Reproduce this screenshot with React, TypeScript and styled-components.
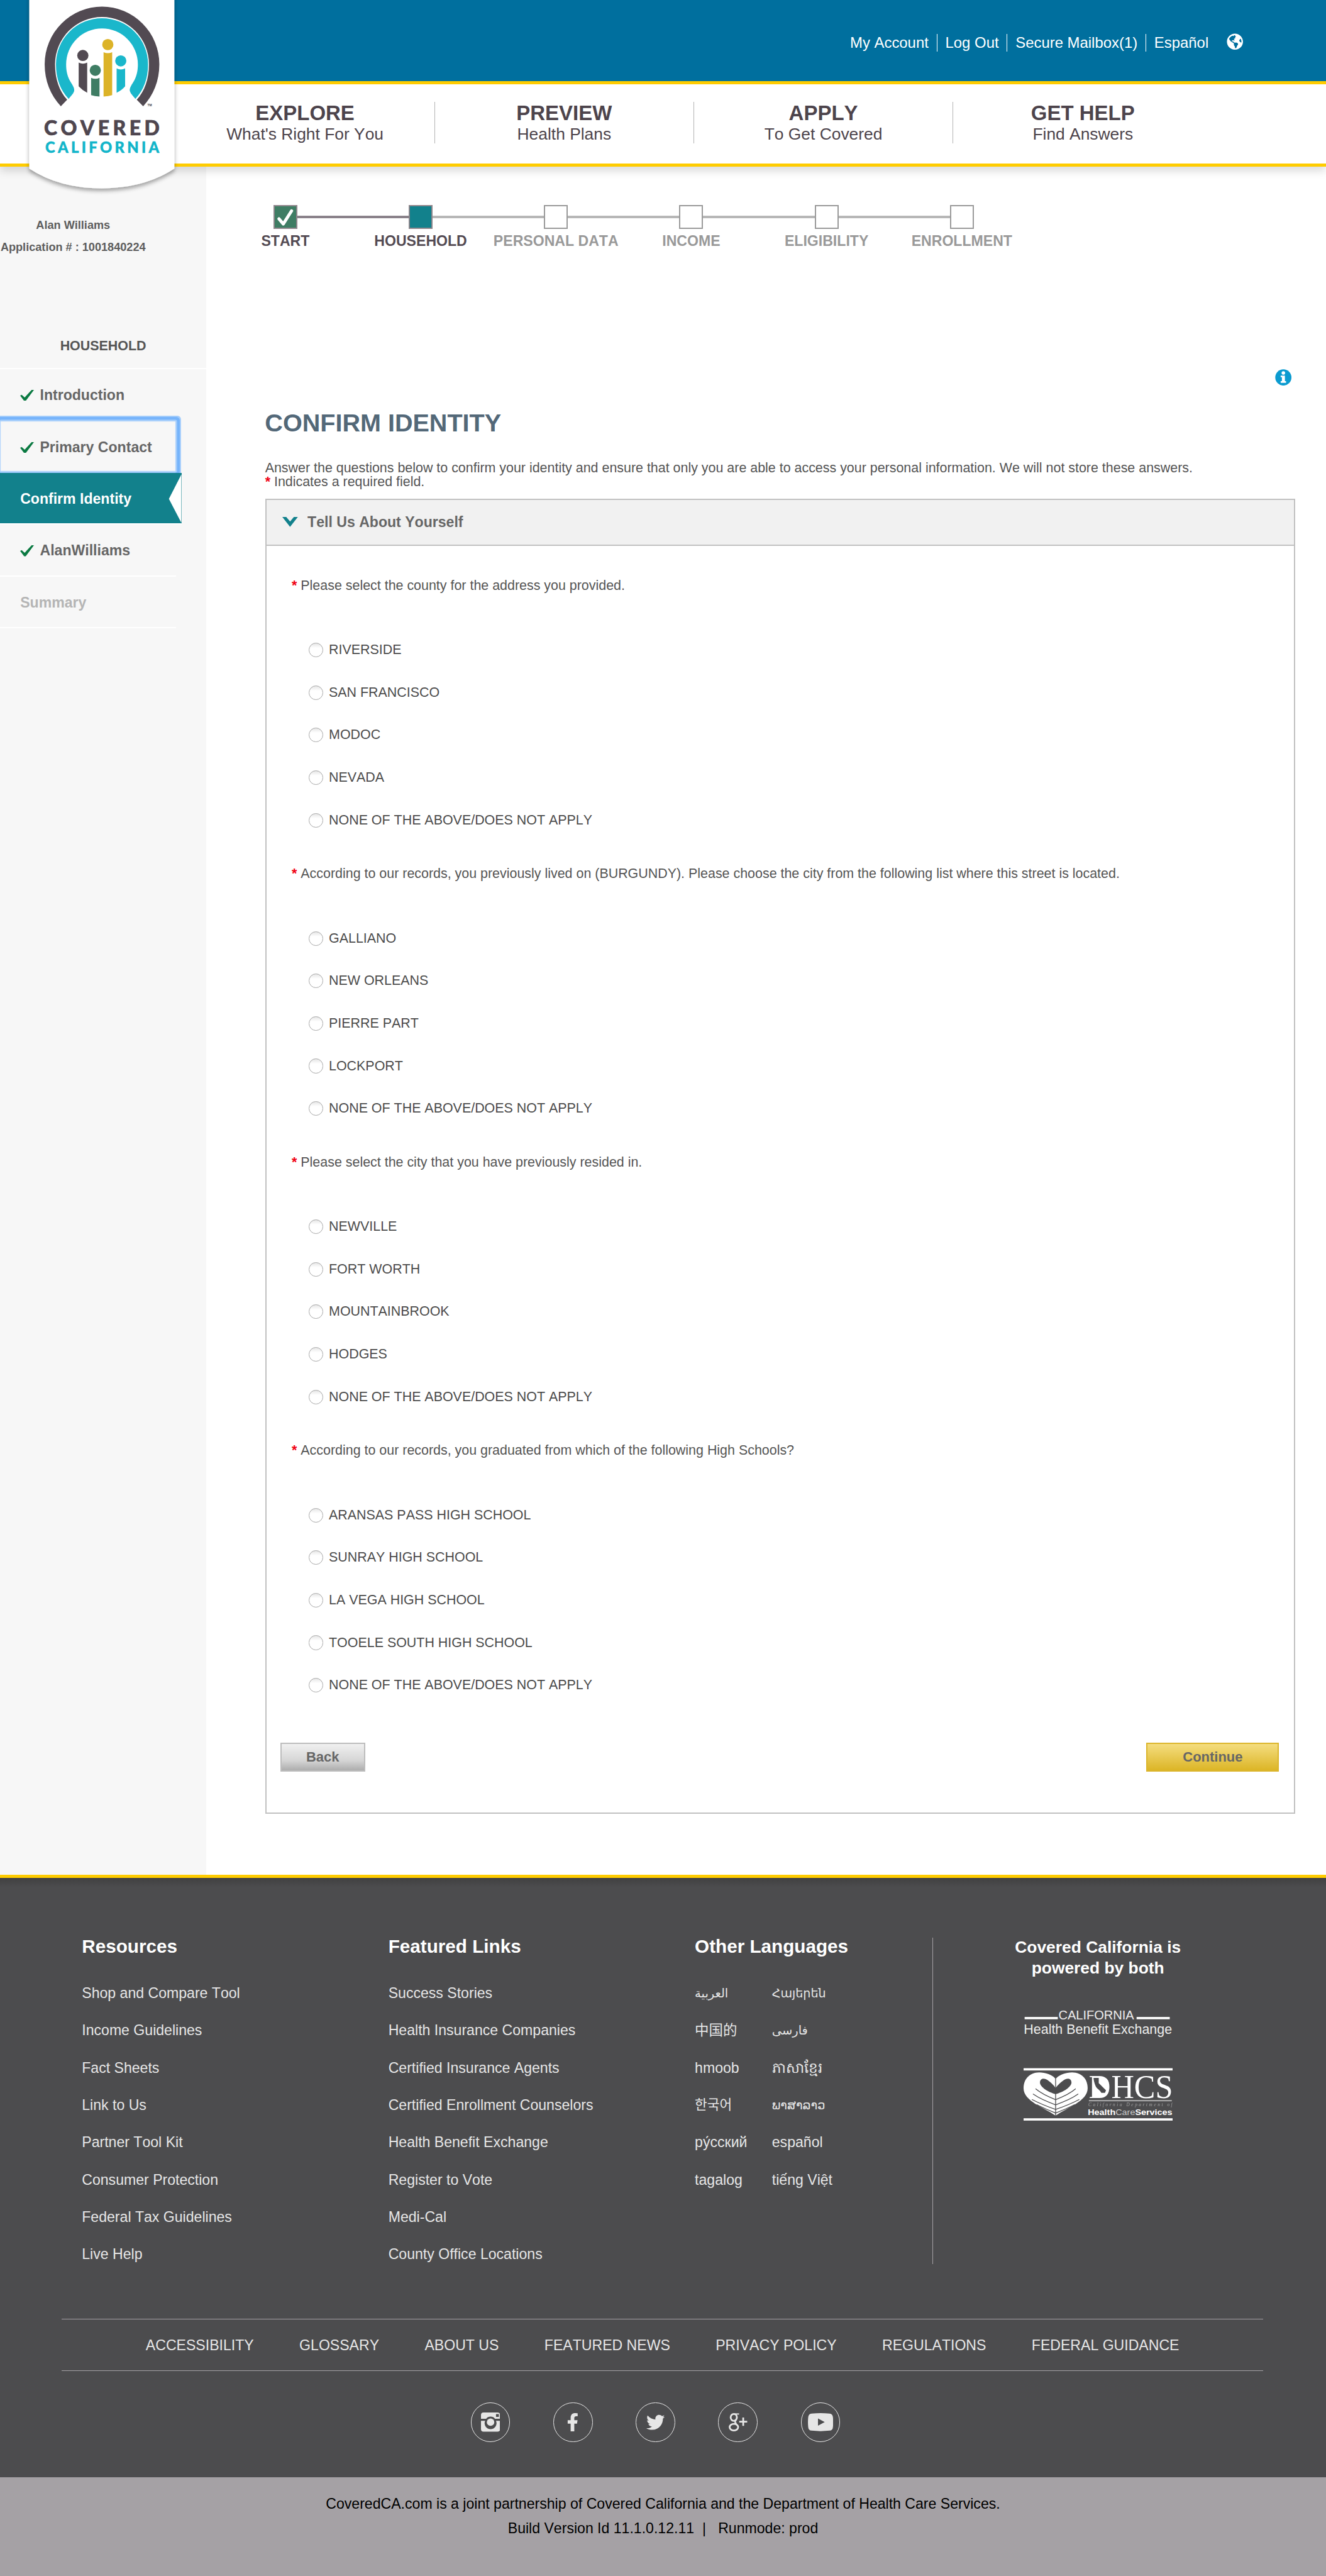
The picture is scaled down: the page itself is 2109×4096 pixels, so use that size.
import React from "react";
import styled, { createGlobalStyle, css } from "styled-components";
import { FaFacebookF, FaTwitter, FaGlobeAmericas } from "react-icons/fa";

const GlobalStyle = createGlobalStyle`
  html, body { margin: 0; padding: 0; background: #fff; }
  *, *::before, *::after { box-sizing: border-box; }
`;

const sans = `"Liberation Sans", Arial, "DejaVu Sans", "Noto Sans", "Noto Sans CJK SC", "Noto Sans CJK KR", sans-serif`;
const hairline = "1px";
const frameline = "1.22px";

const Page = styled.div`
  zoom: 1.64895;
  width: 1279px;
  height: 2484px;
  overflow: hidden;
  background: #fff;
  font-family: ${sans};
  font-kerning: none;
  color: #555;
`;

/* ---------- header ---------- */
const Header = styled.header`
  position: relative;
  z-index: 2;
  height: 161px;
  box-shadow: 0 4px 8px rgba(0, 0, 0, 0.14);
`;
const TopBar = styled.div`
  height: 81px;
  background: #006f9e;
  border-bottom: 3.1px solid #ffcc00;
  display: flex;
  align-items: flex-start;
  justify-content: flex-end;
  padding: 33px 79.8px 0 0;
`;
const TopLink = styled.a<{ $last?: boolean }>`
  font-size: 14.5px;
  line-height: 17px;
  padding: 0 7.8px;
  color: #fff;
  white-space: nowrap;
  border-right: ${(p) => (p.$last ? "0" : hairline + " solid #fff")};
`;
const Globe = styled.span`
  display: flex;
  margin: -1px 0 0 9.7px;
  color: #fff;
  font-size: 16px;
`;
const MainNav = styled.nav`
  height: 80px;
  background: #fff;
  border-bottom: 3.1px solid #ffcc00;
  display: flex;
  padding: 17px 0 0 169.5px;
`;
const NavItem = styled.a`
  width: 250px;
  height: 40px;
  text-align: center;
  color: #4d444c;
  border-right: ${hairline} solid #b3b3b3;
  &:last-child { border-right: 0; }
`;
const NavTitle = styled.div`
  font-size: 20px;
  font-weight: bold;
  line-height: 22px;
`;
const NavSub = styled.div`
  padding-top: 0.5px;
  font-size: 16px;
  line-height: 18px;
`;
const LogoSlot = styled.div`
  position: absolute;
  left: 18px;
  top: 0;
  width: 160px;
  height: 200px;
`;

const Logo = () => (
  <svg width="160" height="200" viewBox="18 0 160 200">
    <defs>
      <filter id="tag-shadow" x="-20%" y="-10%" width="140%" height="125%">
        <feDropShadow dx="0" dy="2.5" stdDeviation="2" floodOpacity="0.35" />
      </filter>
    </defs>
    <path d="M28-10H168V162.5Q139 181.6 98 181.6T28 162.5Z" fill="#fff" filter="url(#tag-shadow)" />
    <path
      fill="#524a52"
      d="M58.5 102.5C48.5 91.5 42.9 78 42.9 62A55.3 55.6 0 0 1 153.5 62C153.5 78 147.9 91.5 137.9 102.5L131.7 96.2C139.4 88 143.5 76 143.5 62A45.3 45.6 0 0 0 52.9 62C52.9 76 57 88 64.6 96.2Z"
    />
    <path
      fill="#1ab7cb"
      d="M66 95.3C58 86.8 53.8 76 53.8 62A44.4 44.4 0 0 1 142.6 62C142.6 76 138.4 86.8 130.4 95.3C128.5 93 126 90.5 125.2 88.2C124 85 127.5 81 129.6 77C131.8 72.5 132.8 68 132.8 62A34.6 34.6 0 0 0 63.6 62C63.6 68 64.6 72.5 66.8 77C68.9 81 72.4 85 71.2 88.2C70.4 90.5 67.9 93 66 95.3Z"
    />
    <g fill="#524a52">
      <circle cx="79.7" cy="53.5" r="5.4" />
      <path d="M75.7 60.3Q79.8 62.4 83.9 60.3V89.4Q79 87 75.7 83.3Z" />
    </g>
    <g fill="#3f7d64">
      <circle cx="91.7" cy="67.8" r="5.4" />
      <path d="M87.7 75Q91.8 77 95.8 75V93.1Q91 92.8 87.7 91.7Z" />
    </g>
    <g fill="#dcb328">
      <circle cx="103.8" cy="43" r="5.4" />
      <path d="M99.7 50.3Q103.8 52.3 108 50.3V91.7Q104.5 92.8 99.7 93.1Z" />
    </g>
    <g fill="#1ab7cb">
      <circle cx="116.3" cy="58.7" r="5.4" />
      <path d="M112.3 66Q116.4 68 120.5 66V83.3Q117 87.4 112.3 89.4Z" />
    </g>
    <text x="142" y="102.3" fontSize="3" fontWeight="bold" fill="#524a52" fontFamily={sans}>TM</text>
    <text x="42.2" y="130.7" fontSize="19.4" fontWeight="900" fill="#4f464f" stroke="#4f464f" strokeWidth="0.4" fontFamily="Lato, sans-serif" textLength="111.5" lengthAdjust="spacing">COVERED</text>
    <text x="43.4" y="147.6" fontSize="14.4" fontWeight="900" fill="#12b5ca" stroke="#12b5ca" strokeWidth="0.3" fontFamily="Lato, sans-serif" textLength="110" lengthAdjust="spacing">CALIFORNIA</text>
  </svg>
);

/* ---------- sidebar ---------- */
const Body = styled.div`
  display: flex;
  height: 1647px;
`;
const Sidebar = styled.aside`
  width: 199px;
  flex: none;
  background: #f7f7f7;
  padding-top: 46px;
`;
const Applicant = styled.div`
  width: 141px;
  font-size: 11px;
  font-weight: bold;
  line-height: 21px;
  text-align: center;
  white-space: nowrap;
  color: #5d5d5d;
`;
const SideTitle = styled.div`
  margin-top: 74.7px;
  height: 32.3px;
  font-size: 13px;
  font-weight: bold;
  line-height: 20px;
  text-align: center;
  color: #555;
  border-bottom: ${frameline} solid #fff;
`;
const SideList = styled.ul`
  list-style: none;
  margin: 0;
  padding: 0;
  width: 170px;
`;
type RowKind = "done" | "focus" | "active" | "disabled";
const SideRow = styled.li<{ $kind: RowKind }>`
  position: relative;
  height: 50px;
  padding: 1.8px 0 0 19.5px;
  display: flex;
  align-items: center;
  font-size: 14px;
  font-weight: bold;
  color: ${(p) => (p.$kind === "active" ? "#fff" : p.$kind === "disabled" ? "#b5b5b5" : "#666")};
  border-bottom: ${frameline} solid #fff;
  ${(p) =>
    p.$kind === "focus" &&
    css`
      height: 49px;
      margin-bottom: 1px;
      border-bottom: 0;
      border-radius: 1px;
      box-shadow: inset 0 0 0 0.7px #b5d6fb, 0 0 0 1px #a4cdfb, 0 0 0 3.6px #76b4fb, 0 0 0 4.8px #a4cdfb;
    `}
  ${(p) =>
    p.$kind === "active" &&
    css`
      width: 175px;
      background: #12818c;
      background-clip: padding-box;
    `}
`;
const CheckSlot = styled.span`
  display: flex;
  width: 19px;
`;
const Notch = styled.svg`
  position: absolute;
  right: 0;
  top: 0;
`;
const Check = () => (
  <CheckSlot>
    <svg width="13.4" height="10.6" viewBox="0 0 52 50" preserveAspectRatio="none">
      <path d="M0 26L6 22L17 34L43 0H52L21 50H15Z" fill="#0b7a42" />
    </svg>
  </CheckSlot>
);
const sideRows: { label: string; kind: RowKind }[] = [
  { label: "Introduction", kind: "done" },
  { label: "Primary Contact", kind: "focus" },
  { label: "Confirm Identity", kind: "active" },
  { label: "AlanWilliams", kind: "done" },
  { label: "Summary", kind: "disabled" },
];

/* ---------- main ---------- */
const Main = styled.main`
  flex: 1;
  padding-top: 37px;
`;
const Steps = styled.div`
  display: flex;
  margin-left: 11px;
`;
const Step = styled.div`
  width: 130.5px;
`;
const StepTrack = styled.div`
  display: flex;
  align-items: center;
`;
const StepLine = styled.span<{ $tone: "none" | "dark" | "light" }>`
  flex: 1;
  height: 2.4px;
  margin-bottom: 1px;
  background: ${(p) => (p.$tone === "none" ? "transparent" : p.$tone === "dark" ? "#8a828a" : "#b7b7b7")};
`;
const StepBox = styled.span<{ $state: "done" | "current" | "todo" }>`
  width: 23px;
  height: 23px;
  border: ${frameline} solid ${(p) => (p.$state === "todo" ? "#9a9a9a" : "#8f868c")};
  background: ${(p) => (p.$state === "done" ? "#3f7d64" : p.$state === "current" ? "#12818c" : "#fff")};
  display: flex;
  align-items: center;
  justify-content: center;
`;
const StepLabel = styled.div<{ $on: boolean }>`
  margin: 3.3px -10px 0;
  font-size: 14px;
  font-weight: bold;
  line-height: 16px;
  height: 15.7px;
  text-align: center;
  white-space: nowrap;
  color: ${(p) => (p.$on ? "#544b53" : "#999")};
`;
const Content = styled.div`
  width: 993px;
  margin-left: 57px;
`;
const InfoRow = styled.div`
  display: flex;
  justify-content: flex-end;
  height: 16px;
  margin-top: 116px;
  padding-right: 3px;
`;
const Title = styled.h1`
  margin: 21.6px 0 0 -0.5px;
  font-size: 24px;
  line-height: 28px;
  color: #536878;
`;
const Intro = styled.p`
  margin: 23.8px 0 0 -0.3px;
  font-size: 13px;
  line-height: 12.9px;
  height: 26px;
  white-space: nowrap;
`;
const Star = styled.span`
  color: #f00012;
  font-weight: bold;
`;
const Panel = styled.section`
  margin-top: 9.6px;
  height: 1268px;
  border: ${frameline} solid #c1c1c1;
`;
const PanelHead = styled.div`
  height: 44px;
  padding: 0 0 0 15px;
  display: flex;
  align-items: center;
  gap: 9.4px;
  background: #f1f1f1;
  border-bottom: ${frameline} solid #c1c1c1;
  font-size: 14px;
  font-weight: bold;
  color: #666;
`;
const Questions = styled.div`
  padding: 7.2px 0 0 24.2px;
`;
const Question = styled.fieldset`
  border: 0;
  margin: 0;
  padding: 21.5px 0 0;
  min-width: 0;
`;
const Prompt = styled.div`
  font-size: 13px;
  line-height: 20px;
  margin-bottom: 31.6px;
  white-space: nowrap;
`;
const Option = styled.label`
  display: flex;
  align-items: center;
  gap: 5.5px;
  height: 41px;
  margin-left: 16.3px;
  font-size: 13px;
  color: #4c4c4c;
`;
const Radio = styled.span`
  width: 14px;
  height: 14px;
  border-radius: 50%;
  border: 1px solid #a8a8a8;
  background: linear-gradient(#e6e6e6, #fff 35%);
`;
const Actions = styled.div`
  display: flex;
  justify-content: space-between;
  padding: 34.8px 14px 0 13px;
`;
const Button = styled.button<{ $primary?: boolean }>`
  width: ${(p) => (p.$primary ? "128px" : "82px")};
  height: 28px;
  padding: 0;
  font: bold 13.333px/26px ${sans};
  color: #666;
  border: ${frameline} solid ${(p) => (p.$primary ? "#dbb52c" : "#bdbdbd")};
  background: ${(p) =>
    p.$primary ? "linear-gradient(#f4dd7f, #dcb526)" : "linear-gradient(#f0f0f0, #d6d6d6 62%, #adadad)"};
`;

const steps = ["START", "HOUSEHOLD", "PERSONAL DATA", "INCOME", "ELIGIBILITY", "ENROLLMENT"];
const none = "NONE OF THE ABOVE/DOES NOT APPLY";
const questions = [
  { q: "Please select the county for the address you provided.", a: ["RIVERSIDE", "SAN FRANCISCO", "MODOC", "NEVADA", none] },
  {
    q: "According to our records, you previously lived on (BURGUNDY). Please choose the city from the following list where this street is located.",
    a: ["GALLIANO", "NEW ORLEANS", "PIERRE PART", "LOCKPORT", none],
  },
  { q: "Please select the city that you have previously resided in.", a: ["NEWVILLE", "FORT WORTH", "MOUNTAINBROOK", "HODGES", none] },
  {
    q: "According to our records, you graduated from which of the following High Schools?",
    a: ["ARANSAS PASS HIGH SCHOOL", "SUNRAY HIGH SCHOOL", "LA VEGA HIGH SCHOOL", "TOOELE SOUTH HIGH SCHOOL", none],
  },
];

/* ---------- footer ---------- */
const Footer = styled.footer`
  height: 581px;
  border-top: 3.1px solid #ffcc00;
  padding-top: 55.9px;
  background: linear-gradient(#404041, #4c4c4e 9px);
  color: #e6e6e6;
`;
const FootCols = styled.div`
  display: grid;
  grid-template-columns: 295.6px 295.6px 229.2px 318.6px;
  height: 324.5px;
  padding-left: 79px;
`;
const FootTitle = styled.h2`
  margin: 0 0 17.2px;
  font-size: 18px;
  line-height: 20px;
  color: #fff;
`;
const LinkList = styled.div`
  display: flex;
  flex-direction: column;
  font-size: 14px;
  line-height: 36px;
  white-space: nowrap;
`;
const LangGrid = styled.div`
  display: grid;
  grid-template-columns: 74.4px 1fr;
  grid-auto-rows: 36px;
  line-height: 36px;
  white-space: nowrap;
`;
const Lang = styled.a<{ $size?: number }>`
  font-size: ${(p) => p.$size ?? 14}px;
`;
const Powered = styled.div`
  height: 314.7px;
  margin-top: 1.3px;
  border-left: ${hairline} solid #a5a1a5;
  display: flex;
  flex-direction: column;
  align-items: center;
`;
const PoweredTitle = styled.div`
  margin-top: -0.5px;
  font-size: 16px;
  font-weight: bold;
  line-height: 20px;
  text-align: center;
  color: #fff;
`;
const PartnerLogos = styled.svg`
  display: block;
  margin-top: 24.5px;
`;
const FootNav = styled.nav`
  width: 1159px;
  height: 50px;
  margin: 44.6px 0 0 59.5px;
  padding-top: 1px;
  display: flex;
  justify-content: center;
  align-items: center;
  gap: 43.9px;
  border-top: ${hairline} solid #a5a1a5;
  border-bottom: ${hairline} solid #a5a1a5;
  font-size: 14px;
  white-space: nowrap;
`;
const Social = styled.div`
  display: flex;
  gap: 41.6px;
  padding: 30.7px 0 0 454px;
`;
const SocialIcon = styled.a`
  width: 38px;
  height: 38px;
  border: 1px solid #e6e6e6;
  border-radius: 50%;
  display: flex;
  align-items: center;
  justify-content: center;
`;
const Legal = styled.div`
  height: 95px;
  padding-top: 13.5px;
  background: #a5a1a5;
  color: #000;
  font-size: 14px;
  line-height: 24px;
  text-align: center;
  white-space: pre;
`;

const footCols = [
  {
    t: "Resources",
    l: ["Shop and Compare Tool", "Income Guidelines", "Fact Sheets", "Link to Us", "Partner Tool Kit", "Consumer Protection", "Federal Tax Guidelines", "Live Help"],
  },
  {
    t: "Featured Links",
    l: ["Success Stories", "Health Insurance Companies", "Certified Insurance Agents", "Certified Enrollment Counselors", "Health Benefit Exchange", "Register to Vote", "Medi-Cal", "County Office Locations"],
  },
];
const languages: { name: string; size?: number }[] = [
  { name: "العربية", size: 11.8 },
  { name: "Հայերեն", size: 11.6 },
  { name: "中国的", size: 13.6 },
  { name: "فارسی", size: 11.8 },
  { name: "hmoob" },
  { name: "ភាសាខ្មែរ" },
  { name: "한국어", size: 13 },
  { name: "ພາສາລາວ", size: 12 },
  { name: "ру́сский" },
  { name: "español" },
  { name: "tagalog" },
  { name: "tiếng Việt" },
];
const footNav = ["ACCESSIBILITY", "GLOSSARY", "ABOUT US", "FEATURED NEWS", "PRIVACY POLICY", "REGULATIONS", "FEDERAL GUIDANCE"];

const Partners = () => (
  <PartnerLogos width="144" height="120" viewBox="988 1932 144 120" fill="#fff" stroke="none">
    <rect x="989" y="1944.8" width="32" height="2.2" />
    <rect x="1097" y="1944.8" width="32" height="2.2" />
    <text x="1021.6" y="1947" fontSize="12.2" fontFamily={sans} fill="#ececec" textLength="73">CALIFORNIA</text>
    <text x="988.2" y="1961" fontSize="13" fontFamily={sans} fill="#ececec" textLength="143">Health Benefit Exchange</text>
    <rect x="988" y="1994.2" width="144" height="2.2" />
    <rect x="988" y="2042.5" width="144" height="2.2" />
    <path d="M1018.9 2040C1008 2032 988 2026 988 2013.5C988 2003.5 995 1998.3 1003 1998.3C1010 1998.3 1016 2001 1018.9 2004.5C1022 2001 1028 1998.3 1034.8 1998.3C1043 1998.3 1049.8 2003.5 1049.8 2013.5C1049.8 2026 1030 2032 1018.9 2040Z" />
    <path d="M1018.9 2019.2C1012 2017.5 1003.8 2012.5 1003.8 2008C1003.8 2004.5 1007 2003.6 1009.5 2004.8C1013.5 2006.8 1017 2010.5 1018.9 2013.3C1021 2010.5 1024.5 2006.8 1028.5 2004.8C1031 2003.6 1034.2 2004.5 1034.2 2008C1034.2 2012.5 1026 2017.5 1018.9 2019.2Z" fill="#4c4c4e" />
    <g fill="none" stroke="#4c4c4e" strokeWidth="0.8" strokeLinecap="round">
      <path d="M1018.9 2004.5V2040" />
      <path d="M999.8 2014.2Q1006 2019.5 1018.9 2024.5Q1032 2019.5 1038 2014.2" />
      <path d="M997.3 2019.2Q1005 2024.5 1018.9 2029.5Q1033 2024.5 1040.5 2019.2" />
      <path d="M996.3 2024.5Q1006 2029.5 1018.9 2034Q1032 2029.5 1041.5 2024.5" />
      <path d="M1001 2029.5Q1010 2034 1018.9 2037.5Q1028 2034 1037 2029.5" />
    </g>
    <text x="1051" y="2022.8" fontSize="32.5" fontFamily='"Liberation Serif", serif' textLength="21" lengthAdjust="spacingAndGlyphs">D</text>
    <text x="1072.6" y="2022.8" fontSize="32.5" fontFamily='"Liberation Serif", serif' textLength="59.4" lengthAdjust="spacingAndGlyphs">HCS</text>
    <path d="M1054 2002H1061C1067 2003 1070.5 2007 1070.5 2012C1070.5 2018 1067 2022 1061 2022H1054Z" />
    <path d="M1055.5 2003.5H1060.5V2008.5L1067.5 2015.5L1066.5 2018H1063C1061.5 2015 1058.5 2014 1057.5 2011.5C1056.5 2009 1055.5 2006 1055.5 2003.5Z" fill="#4c4c4e" />
    <rect x="1051" y="2025" width="80" height="1.1" opacity="0.6" />
    <text x="1050.5" y="2031" fontSize="4.4" fontStyle="italic" fontFamily='"Liberation Serif", serif' textLength="81" opacity="0.45">California Department of</text>
    <text x="1050" y="2039.6" fontSize="8" fontWeight="bold" fontFamily={sans} textLength="81.5" lengthAdjust="spacingAndGlyphs">
      Health<tspan fontWeight="normal" fill="#c8c8c8">Care</tspan>Services
    </text>
  </PartnerLogos>
);

export default function App() {
  return (
    <>
      <GlobalStyle />
      <Page>
        <Header>
          <TopBar>
            <TopLink>My Account</TopLink>
            <TopLink>Log Out</TopLink>
            <TopLink>Secure Mailbox(1)</TopLink>
            <TopLink $last>Español</TopLink>
            <Globe><FaGlobeAmericas /></Globe>
          </TopBar>
          <MainNav>
            {[
              ["EXPLORE", "What's Right For You"],
              ["PREVIEW", "Health Plans"],
              ["APPLY", "To Get Covered"],
              ["GET HELP", "Find Answers"],
            ].map(([t, s]) => (
              <NavItem key={t}>
                <NavTitle>{t}</NavTitle>
                <NavSub>{s}</NavSub>
              </NavItem>
            ))}
          </MainNav>
          <LogoSlot><Logo /></LogoSlot>
        </Header>

        <Body>
          <Sidebar>
            <Applicant>
              <div>Alan Williams</div>
              <div>Application # : 1001840224</div>
            </Applicant>
            <SideTitle>HOUSEHOLD</SideTitle>
            <SideList>
              {sideRows.map((r) => (
                <SideRow key={r.label} $kind={r.kind}>
                  {(r.kind === "done" || r.kind === "focus") && <Check />}
                  {r.label}
                  {r.kind === "active" && (
                    <Notch width="13" height="49" viewBox="0 0 13 49" preserveAspectRatio="none">
                      <path d="M13 1.5L1 25L13 48Z" fill="#fff" />
                    </Notch>
                  )}
                </SideRow>
              ))}
            </SideList>
          </Sidebar>

          <Main>
            <Steps>
              {steps.map((s, i) => (
                <Step key={s}>
                  <StepTrack>
                    <StepLine $tone={i === 0 ? "none" : i === 1 ? "dark" : "light"} />
                    <StepBox $state={i === 0 ? "done" : i === 1 ? "current" : "todo"}>
                      {i === 0 && (
                        <svg width="17" height="18" viewBox="0 0 17 18" fill="none" stroke="#fff" strokeWidth="3" strokeLinecap="round" strokeLinejoin="round">
                          <path d="M2.2 10.2L6.4 15.2L14.4 2.6" />
                        </svg>
                      )}
                    </StepBox>
                    <StepLine $tone={i === 5 ? "none" : i === 0 ? "dark" : "light"} />
                  </StepTrack>
                  <StepLabel $on={i < 2}>{s}</StepLabel>
                </Step>
              ))}
            </Steps>

            <Content>
              <InfoRow>
                <svg width="16" height="16" viewBox="0 0 16 16">
                  <circle cx="8" cy="8" r="7.8" fill="#0b9bd0" />
                  <circle cx="8" cy="3.6" r="1.7" fill="#fff" />
                  <path d="M5.4 6.2H9.5V11.6H10.6V13.2H5.4V11.6H6.6V7.8H5.4Z" fill="#fff" />
                </svg>
              </InfoRow>
              <Title>CONFIRM IDENTITY</Title>
              <Intro>
                Answer the questions below to confirm your identity and ensure that only you are able to access your personal information. We will not store these answers.
                <br />
                <Star>*</Star> Indicates a required field.
              </Intro>
              <Panel>
                <PanelHead>
                  <svg width="15" height="9.5" viewBox="0 0 47 34" preserveAspectRatio="none">
                    <path d="M0 0H12L23.5 16L35 0H47L23.5 34Z" fill="#12818c" />
                  </svg>
                  Tell Us About Yourself
                </PanelHead>
                <Questions>
                  {questions.map((item) => (
                    <Question key={item.q}>
                      <Prompt><Star>*</Star> {item.q}</Prompt>
                      {item.a.map((a) => (
                        <Option key={a}><Radio />{a}</Option>
                      ))}
                    </Question>
                  ))}
                </Questions>
                <Actions>
                  <Button>Back</Button>
                  <Button $primary>Continue</Button>
                </Actions>
              </Panel>
            </Content>
          </Main>
        </Body>

        <Footer>
          <FootCols>
            {footCols.map((c) => (
              <div key={c.t}>
                <FootTitle>{c.t}</FootTitle>
                <LinkList>{c.l.map((l) => <a key={l}>{l}</a>)}</LinkList>
              </div>
            ))}
            <div>
              <FootTitle>Other Languages</FootTitle>
              <LangGrid>{languages.map((l) => <Lang key={l.name} $size={l.size}>{l.name}</Lang>)}</LangGrid>
            </div>
            <Powered>
              <PoweredTitle>Covered California is<br />powered by both</PoweredTitle>
              <Partners />
            </Powered>
          </FootCols>
          <FootNav>{footNav.map((n) => <a key={n}>{n}</a>)}</FootNav>
          <Social>
            <SocialIcon>
              <svg width="18.5" height="18.5" viewBox="0 0 37 37">
                <path fill="#e6e6e6" fillRule="evenodd" d="M5 0H32Q37 0 37 5V12H27A11 11 0 0 0 10 12H0V5Q0 0 5 0ZM29 3V8.5H34.5V3Z" />
                <path fill="#e6e6e6" d="M0 16H8A11.5 11.5 0 1 0 29 16H37V32Q37 37 32 37H5Q0 37 0 32Z" />
                <circle cx="18.5" cy="18.7" r="7.2" fill="#e6e6e6" />
              </svg>
            </SocialIcon>
            <SocialIcon><FaFacebookF size={18} /></SocialIcon>
            <SocialIcon><FaTwitter size={17.8} /></SocialIcon>
            <SocialIcon>
              <svg width="18" height="17.6" viewBox="0 0 36 35" fill="none" stroke="#e6e6e6">
                <ellipse cx="9.8" cy="8.2" rx="6" ry="6.6" strokeWidth="3.4" />
                <path d="M10 1.6H20" strokeWidth="2.4" />
                <path d="M14 13.5C11 17 12.5 18.5 15 20.5" strokeWidth="3" />
                <ellipse cx="10" cy="27" rx="8.2" ry="6.4" strokeWidth="3.4" />
                <path d="M28 8.5V24.5M20.3 16.5H35.7" strokeWidth="3.4" />
              </svg>
            </SocialIcon>
            <SocialIcon>
              <svg width="24.4" height="17.4" viewBox="0 0 49 35">
                <path fill="#e6e6e6" fillRule="evenodd" d="M7 1Q24.5 -1 42 1Q48 1.5 48.5 8Q49.5 17.5 48.5 27Q48 33.5 42 34Q24.5 36 7 34Q1 33.5 .5 27Q-.5 17.5 .5 8Q1 1.5 7 1ZM19.5 10.5V24.5L32.5 17.5Z" />
              </svg>
            </SocialIcon>
          </Social>
        </Footer>
        <Legal>{"CoveredCA.com is a joint partnership of Covered California and the Department of Health Care Services.\nBuild Version Id 11.1.0.12.11  |   Runmode: prod"}</Legal>
      </Page>
    </>
  );
}
